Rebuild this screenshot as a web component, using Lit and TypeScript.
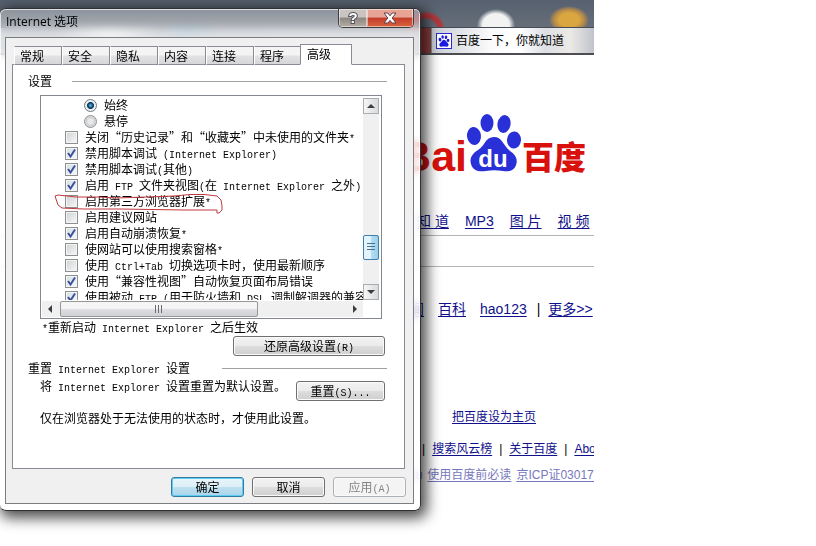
import { LitElement, html, css, svg } from "lit";
import { customElement } from "lit/decorators.js";

/** Wraps runs of Latin text, with the spaces round them, so they take half the advance of a Chinese character. */
const mixed = (text: string) =>
  text
    .split(/([\x20-\x7e]+)/)
    .map((part, i) => (i % 2 ? html`<span class="latin">${part}</span>` : part));

const paw = svg`
  <ellipse cx="8" cy="23" rx="7" ry="9" transform="rotate(-8 8 23)"></ellipse>
  <ellipse cx="21" cy="10" rx="6.5" ry="9"></ellipse>
  <ellipse cx="38" cy="11" rx="6.5" ry="9" transform="rotate(10 38 11)"></ellipse>
  <ellipse cx="48" cy="27" rx="7" ry="8.5" transform="rotate(5 48 27)"></ellipse>
  <path d="M28 24C36 24 37 32 44 38C50 42 52 47 50 52C48 58 42 59 37 58C31 57 25 57 20 58C13 59 7 58 5 51C3 45 7 40 12 37C19 33 19 24 28 24Z"></path>`;

const options = [
  { text: "关闭“历史记录”和“收藏夹”中未使用的文件夹*", on: false },
  { text: "禁用脚本调试 (Internet Explorer)", on: true },
  { text: "禁用脚本调试(其他)", on: true },
  { text: "启用 FTP 文件夹视图(在 Internet Explorer 之外)", on: true },
  { text: "启用第三方浏览器扩展*", on: false },
  { text: "启用建议网站", on: false },
  { text: "启用自动崩溃恢复*", on: true },
  { text: "使网站可以使用搜索窗格*", on: false },
  { text: "使用 Ctrl+Tab 切换选项卡时，使用最新顺序", on: false },
  { text: "使用“兼容性视图”自动恢复页面布局错误", on: true },
  { text: "使用被动 FTP (用于防火墙和 DSL 调制解调器的兼容", on: true },
];

@customElement("browser-page")
export class BrowserPage extends LitElement {
  static styles = css`
    :host { display: block; font: 12px/16px "Liberation Sans", "Noto Sans CJK SC", sans-serif; }
    .wallpaper {
      height: 27px;
      background:
        radial-gradient(circle at 426px 30px, transparent 10px, #b3383c 13px, #b3383c 16px, transparent 19px),
        radial-gradient(ellipse 19px 16px at 496px 25px, #f2f2f2 70%, transparent),
        radial-gradient(ellipse 20px 14px at 569px 20px, #d9a640 50%, #b58a4a 75%, transparent),
        linear-gradient(#56606f, #666e79);
    }
    .tabbar {
      box-sizing: border-box;
      height: 28px;
      display: flex;
      align-items: center;
      gap: 4px;
      padding-left: 436px;
      border-top: 1px solid #444b55;
      border-bottom: 2px solid #4c4c52;
      color: #000;
      background:
        linear-gradient(90deg, transparent 418px, #a13a38 422px, #8a4544 430px, #5d4a4e 431px, transparent 432px),
        radial-gradient(ellipse 50px 20px at 110px 0, #ffffff, transparent),
        radial-gradient(ellipse 30px 10px at 190px 0, #8fc0dc, transparent),
        linear-gradient(90deg, #b9bec6 0, #c4c8ce 400px, #cfd3da 440px, #fafafa 490px, #fff 520px, #dcdfe4 545px, #eceae6 570px, #bfc3ca);
    }
    .favicon { width: 16px; height: 16px; box-sizing: border-box; padding: 1px; border: 1px solid #2a2ad0; background: #fff; fill: #1c1ce0; }
    .page { background: #fff; height: 491px; overflow: hidden; white-space: nowrap; }
    .logo { display: block; width: 190px; height: 60px; margin: 58px 0 0 396px; }
    .red { fill: #d8110d; font-weight: 700; }
    .bai { font-size: 43px; font-family: "Liberation Sans", sans-serif; }
    .hanzi { font-size: 32px; font-weight: 900; font-family: "Noto Sans CJK SC", sans-serif; }
    .blue { fill: #2a30d8; }
    .du { fill: #fff; font: 700 24px "Liberation Sans", sans-serif; }
    nav { display: flex; color: #000; }
    a { color: #10108c; text-underline-offset: 2px; }
    .large { font-size: 14px; line-height: 18px; }
    .primary { padding-left: 417px; gap: 16px; margin-top: 39px; }
    .rule { border: 0; height: 1px; background: #b4b4b4; margin: 5px 0 30px; }
    .rule.second { margin: 0 0 33px; }
    .more { padding-left: 396px; gap: 14px; }
    .more .bar { margin: 0 -6px 0 -4px; }
    .home { padding-left: 452px; margin-top: 91px; }
    .about { padding-left: 422px; gap: 7px; margin-top: 16px; }
    .legal { padding-left: 409px; gap: 5px; margin-top: 10px; color: #7777bb; }
    .legal a { color: #7777bb; }
  `;

  render() {
    return html`
      <div class="wallpaper"></div>
      <div class="tabbar">
        <svg class="favicon" viewBox="0 0 56 60">${paw}</svg>
        <span>百度一下，你就知道</span>
      </div>
      <div class="page">
        <svg class="logo" viewBox="0 0 190 60" role="img" aria-label="Baidu 百度">
          <text class="red bai" x="71" y="58" text-anchor="end">Bai</text>
          <g class="blue" transform="translate(70 0)">${paw}</g>
          <text class="du" x="97" y="54" text-anchor="middle">du</text>
          <text class="red hanzi" x="126" y="56">百度</text>
        </svg>
        <nav class="large primary">
          <a href="#">知 道</a><a href="#">MP3</a><a href="#">图 片</a><a href="#">视 频</a>
        </nav>
        <hr class="rule" />
        <hr class="rule second" />
        <nav class="large more">
          <a href="#">新闻</a><a href="#">百科</a><a href="#">hao123</a><span class="bar">|</span><a href="#">更多&gt;&gt;</a>
        </nav>
        <nav class="home"><a href="#">把百度设为主页</a></nav>
        <nav class="about">
          <span>|</span><a href="#">搜索风云榜</a><span>|</span><a href="#">关于百度</a><span>|</span><a href="#">About Baidu</a>
        </nav>
        <nav class="legal"><span>du</span><a href="#">使用百度前必读</a><a href="#">京ICP证030173号</a></nav>
      </div>
    `;
  }
}

@customElement("options-dialog")
export class OptionsDialog extends LitElement {
  static styles = css`
    :host { display: block; font: 12px/16px "Noto Sans CJK SC", sans-serif; color: #000; }
    .latin { font: 10px/10px "Liberation Mono", monospace; white-space: pre; }
    .window {
      box-sizing: border-box;
      border: 1px solid #2e3136;
      border-left: 0;
      border-radius: 6px;
      padding: 0 6px 6px 5px;
      background: linear-gradient(rgba(255, 255, 255, 0.3), rgba(255, 255, 255, 0.5) 29px, rgba(255, 255, 255, 0.7) 60px);
      backdrop-filter: blur(4px);
      box-shadow: inset 0 0 0 1px rgba(255, 255, 255, 0.7), 3px 4px 14px 3px rgba(0, 0, 0, 0.7);
    }
    .title { display: flex; align-items: flex-start; height: 28px; }
    .title h1 { flex: 1; margin: 5px 0 0 1px; font: 12px/16px "Open Sans", "Noto Sans CJK SC", sans-serif; }
    .caption { display: flex; border: 1px solid #3d3f44; border-top: 0; border-radius: 0 0 5px 5px; overflow: hidden; }
    .caption button { height: 18px; padding: 0; border: 0; display: grid; place-items: center; box-shadow: inset 0 0 0 1px rgba(255, 255, 255, 0.5); }
    .help { width: 28px; background: linear-gradient(#c9c4bf 45%, #8c8680 50%, #b5aea6); }
    .close { width: 46px; background: linear-gradient(#e7a495 45%, #c43c2a 50%, #d9643f); }
    .caption svg { width: 14px; height: 14px; }
    .mark { font: 700 15px "Liberation Sans", sans-serif; fill: #fff; stroke: #50525c; stroke-width: 2px; paint-order: stroke; }
    .client { border: 1px solid #7b7d80; background: #f0f0f0; padding: 6px 8px 6px 6px; }
    .tabs { display: flex; align-items: flex-end; padding-left: 2px; height: 21px; margin-bottom: -1px; position: relative; }
    .tab {
      box-sizing: border-box;
      width: 48px;
      height: 19px;
      padding: 0 0 0 5px;
      margin: 0;
      text-align: left;
      font: inherit;
      color: #000;
      border: 1px solid #898c95;
      border-left-color: #fff;
      background: linear-gradient(#f4f4f4 45%, #e2e2e4 55%, #d6d6d8);
    }
    .tab.active { width: 52px; height: 21px; margin-left: -2px; padding: 0 0 2px 6px; border-left-color: #898c95; border-bottom-color: #fff; background: #fff; }
    .panel { border: 1px solid #898c95; background: #fff; padding: 8px 17px 42px 15px; }
    .heading { display: flex; align-items: center; margin: 0; font: inherit; }
    .heading::after { content: ""; flex: 1; height: 1px; background: #a0a0a0; margin-left: 20px; }
    .heading.wide::after { margin-left: 32px; }
    .list {
      position: relative;
      display: grid;
      grid-template-columns: 1fr 16px;
      grid-template-rows: 203px 16px;
      row-gap: 1px;
      margin: 6px 5px 0 12px;
      padding: 1px 2px 1px 1px;
      border: 1px solid #828790;
      background: #fff;
    }
    .rows { overflow: hidden; white-space: nowrap; padding-left: 23px; }
    .row { display: flex; align-items: center; height: 16px; gap: 7px; }
    .row.nested { padding-left: 19px; }
    input { appearance: none; flex: none; margin: 0; box-sizing: border-box; width: 13px; height: 13px; border: 1px solid #8e8f8f; }
    .box { background: linear-gradient(135deg, #cfd2d6, #f7f7f7); box-shadow: inset 0 0 0 1px #f4f4f4; }
    .box:checked { background: linear-gradient(135deg, #d4dbea, #f7f9fc); }
    .check { position: relative; display: flex; }
    .check svg { position: absolute; inset: 0; width: 13px; height: 13px; fill: none; stroke: #3b5198; stroke-width: 2px; pointer-events: none; }
    .dot { border-radius: 50%; background: radial-gradient(#e9e9e9 30%, #c9ccd0 60%, #f3f3f3 75%); }
    .dot:checked { background: radial-gradient(circle at 50% 50%, #6cc4e4, #14527e 28%, #123a5c 40%, #eef2f5 50%); border-color: #6f7880; }
    .vbar { display: flex; flex-direction: column; background: #f0f0f0; height: 202px; margin-top: 1px; }
    .hbar { display: flex; background: #f0f0f0; }
    .bar-button { box-sizing: border-box; width: 16px; height: 16px; padding: 0; border: 0; background: none; display: grid; place-items: center; flex: none; }
    .vbar .bar-button { border: 1px solid #a9acb0; background: linear-gradient(90deg, #f6f6f6, #d8dadc); }
    .bar-button svg { width: 8px; height: 8px; fill: #3b3d42; }
    .vtrack { flex: 1; display: flex; flex-direction: column; justify-content: flex-end; padding-bottom: 24px; }
    .vthumb { box-sizing: border-box; height: 25px; border: 1px solid #3c7fb1; border-radius: 2px; background: linear-gradient(90deg, #e4f4fc 45%, #b3dcf1 55%, #9ccfea); display: grid; place-items: center; }
    .vthumb::before { content: ""; width: 8px; height: 9px; background: repeating-linear-gradient(#47718f 0 1px, transparent 1px 3px); }
    .hthumb { box-sizing: border-box; width: 69%; border: 1px solid #979797; border-radius: 2px; background: linear-gradient(#f5f5f5 45%, #dcdde0 55%, #cfd1d4); display: grid; place-items: center; }
    .hthumb::before { content: ""; width: 9px; height: 8px; background: repeating-linear-gradient(90deg, #6a6a6a 0 1px, transparent 1px 3px); }
    .htrack { flex: 1; display: flex; padding-left: 2px; }
    .scribble { position: absolute; left: 13px; top: 98px; width: 174px; height: 24px; fill: none; stroke: #c0393c; stroke-width: 1px; pointer-events: none; }
    p { margin: 0; white-space: nowrap; }
    .note { padding-left: 14px; }
    .push {
      box-sizing: border-box;
      height: 20px;
      padding: 0;
      font: inherit;
      color: #000;
      border: 1px solid #707070;
      border-radius: 3px;
      background: linear-gradient(#f3f3f3, #ebebeb 48%, #dddddd 52%, #cfcfcf);
      box-shadow: inset 0 0 0 1px #fafafa;
    }
    .restore { display: block; width: 152px; margin: 1px 2px 4px auto; }
    .reset-row { display: flex; align-items: flex-start; justify-content: space-between; padding: 2px 2px 0 12px; }
    .reset { width: 89px; margin-top: 3px; }
    .hint { padding: 9px 0 0 12px; }
    .footer { display: flex; justify-content: flex-end; gap: 8px; margin: 8px -1px 0 0; }
    .footer .push { width: 73px; }
    .footer .default { border-color: #2f7ca3; background: linear-gradient(#eaf5fa, #dceef6 48%, #bfe0ef 52%, #a9d5ea); box-shadow: inset 0 0 0 1px #5ccdf0; }
    .footer .push:disabled { color: #838383; border-color: #adb2b5; background: #f4f4f4; }
  `;

  private arrow(d: string) {
    return html`<svg viewBox="0 0 8 8"><path d=${d}></path></svg>`;
  }

  render() {
    return html`
      <section class="window" role="dialog" aria-labelledby="title">
        <header class="title">
          <h1 id="title">Internet 选项</h1>
          <div class="caption">
            <button class="help" aria-label="帮助">
              <svg viewBox="0 0 14 14"><text class="mark" x="7" y="12" text-anchor="middle">?</text></svg>
            </button>
            <button class="close" aria-label="关闭">
              <svg viewBox="0 0 14 14">
                <path d="M1 2H4.8L7 4.8L9.2 2H13L9.2 7L13 12H9.2L7 9.4L4.8 12H1L4.8 7Z" fill="#fff" stroke="#5e4048"></path>
              </svg>
            </button>
          </div>
        </header>
        <div class="client">
          <div class="tabs" role="tablist">
            ${["常规", "安全", "隐私", "内容", "连接", "程序", "高级"].map(
              (name) => html`<button class="tab ${name === "高级" ? "active" : ""}" role="tab" aria-selected=${name === "高级"}>${name}</button>`
            )}
          </div>
          <div class="panel" role="tabpanel">
            <h2 class="heading">设置</h2>
            <div class="list">
              <div class="rows">
                <label class="row nested"><input class="dot" type="radio" name="underline" checked />始终</label>
                <label class="row nested"><input class="dot" type="radio" name="underline" />悬停</label>
                ${options.map(
                  (o) => html`<label class="row">
                    <span class="check">
                      <input class="box" type="checkbox" .checked=${o.on} />
                      ${o.on ? html`<svg viewBox="0 0 13 13"><path d="M3 6L5.5 9.5L10 2.5"></path></svg>` : ""}
                    </span>
                    <span>${mixed(o.text)}</span>
                  </label>`
                )}
              </div>
              <div class="vbar">
                <button class="bar-button" aria-label="向上">${this.arrow("M0 6L4 2L8 6Z")}</button>
                <div class="vtrack"><div class="vthumb"></div></div>
                <button class="bar-button" aria-label="向下">${this.arrow("M0 2L4 6L8 2Z")}</button>
              </div>
              <div class="hbar">
                <button class="bar-button" aria-label="向左">${this.arrow("M6 0L2 4L6 8Z")}</button>
                <div class="htrack"><div class="hthumb"></div></div>
                <button class="bar-button" aria-label="向右">${this.arrow("M2 0L6 4L2 8Z")}</button>
              </div>
              <svg class="scribble" viewBox="0 0 174 24">
                <path d="M1 2L4 1L22 3L45 3L62 4L92 3L120 2L136 0.5L150 0.5L163 2L167 6L168 12L168 16L165 19L163 19L163 16L130 16L66 15L30 15L8 14L4 11Z"></path>
              </svg>
            </div>
            <p class="note">${mixed("*重新启动 Internet Explorer 之后生效")}</p>
            <button class="push restore">${mixed("还原高级设置(R)")}</button>
            <h2 class="heading wide"><span>${mixed("重置 Internet Explorer 设置")}</span></h2>
            <div class="reset-row">
              <p>${mixed("将 Internet Explorer 设置重置为默认设置。")}</p>
              <button class="push reset">${mixed("重置(S)...")}</button>
            </div>
            <p class="hint">仅在浏览器处于无法使用的状态时，才使用此设置。</p>
          </div>
          <footer class="footer">
            <button class="push default">确定</button>
            <button class="push">取消</button>
            <button class="push" disabled>${mixed("应用(A)")}</button>
          </footer>
        </div>
      </section>
    `;
  }
}

@customElement("app-root")
export class AppRoot extends LitElement {
  static styles = css`
    :host { display: block; background: #fff; }
    .desktop { position: relative; max-width: 594px; overflow: hidden; }
    .dialog { position: absolute; left: 0; top: 8px; width: 421px; }
  `;

  render() {
    return html`
      <main class="desktop" lang="zh-CN">
        <browser-page></browser-page>
        <options-dialog class="dialog"></options-dialog>
      </main>
    `;
  }
}
